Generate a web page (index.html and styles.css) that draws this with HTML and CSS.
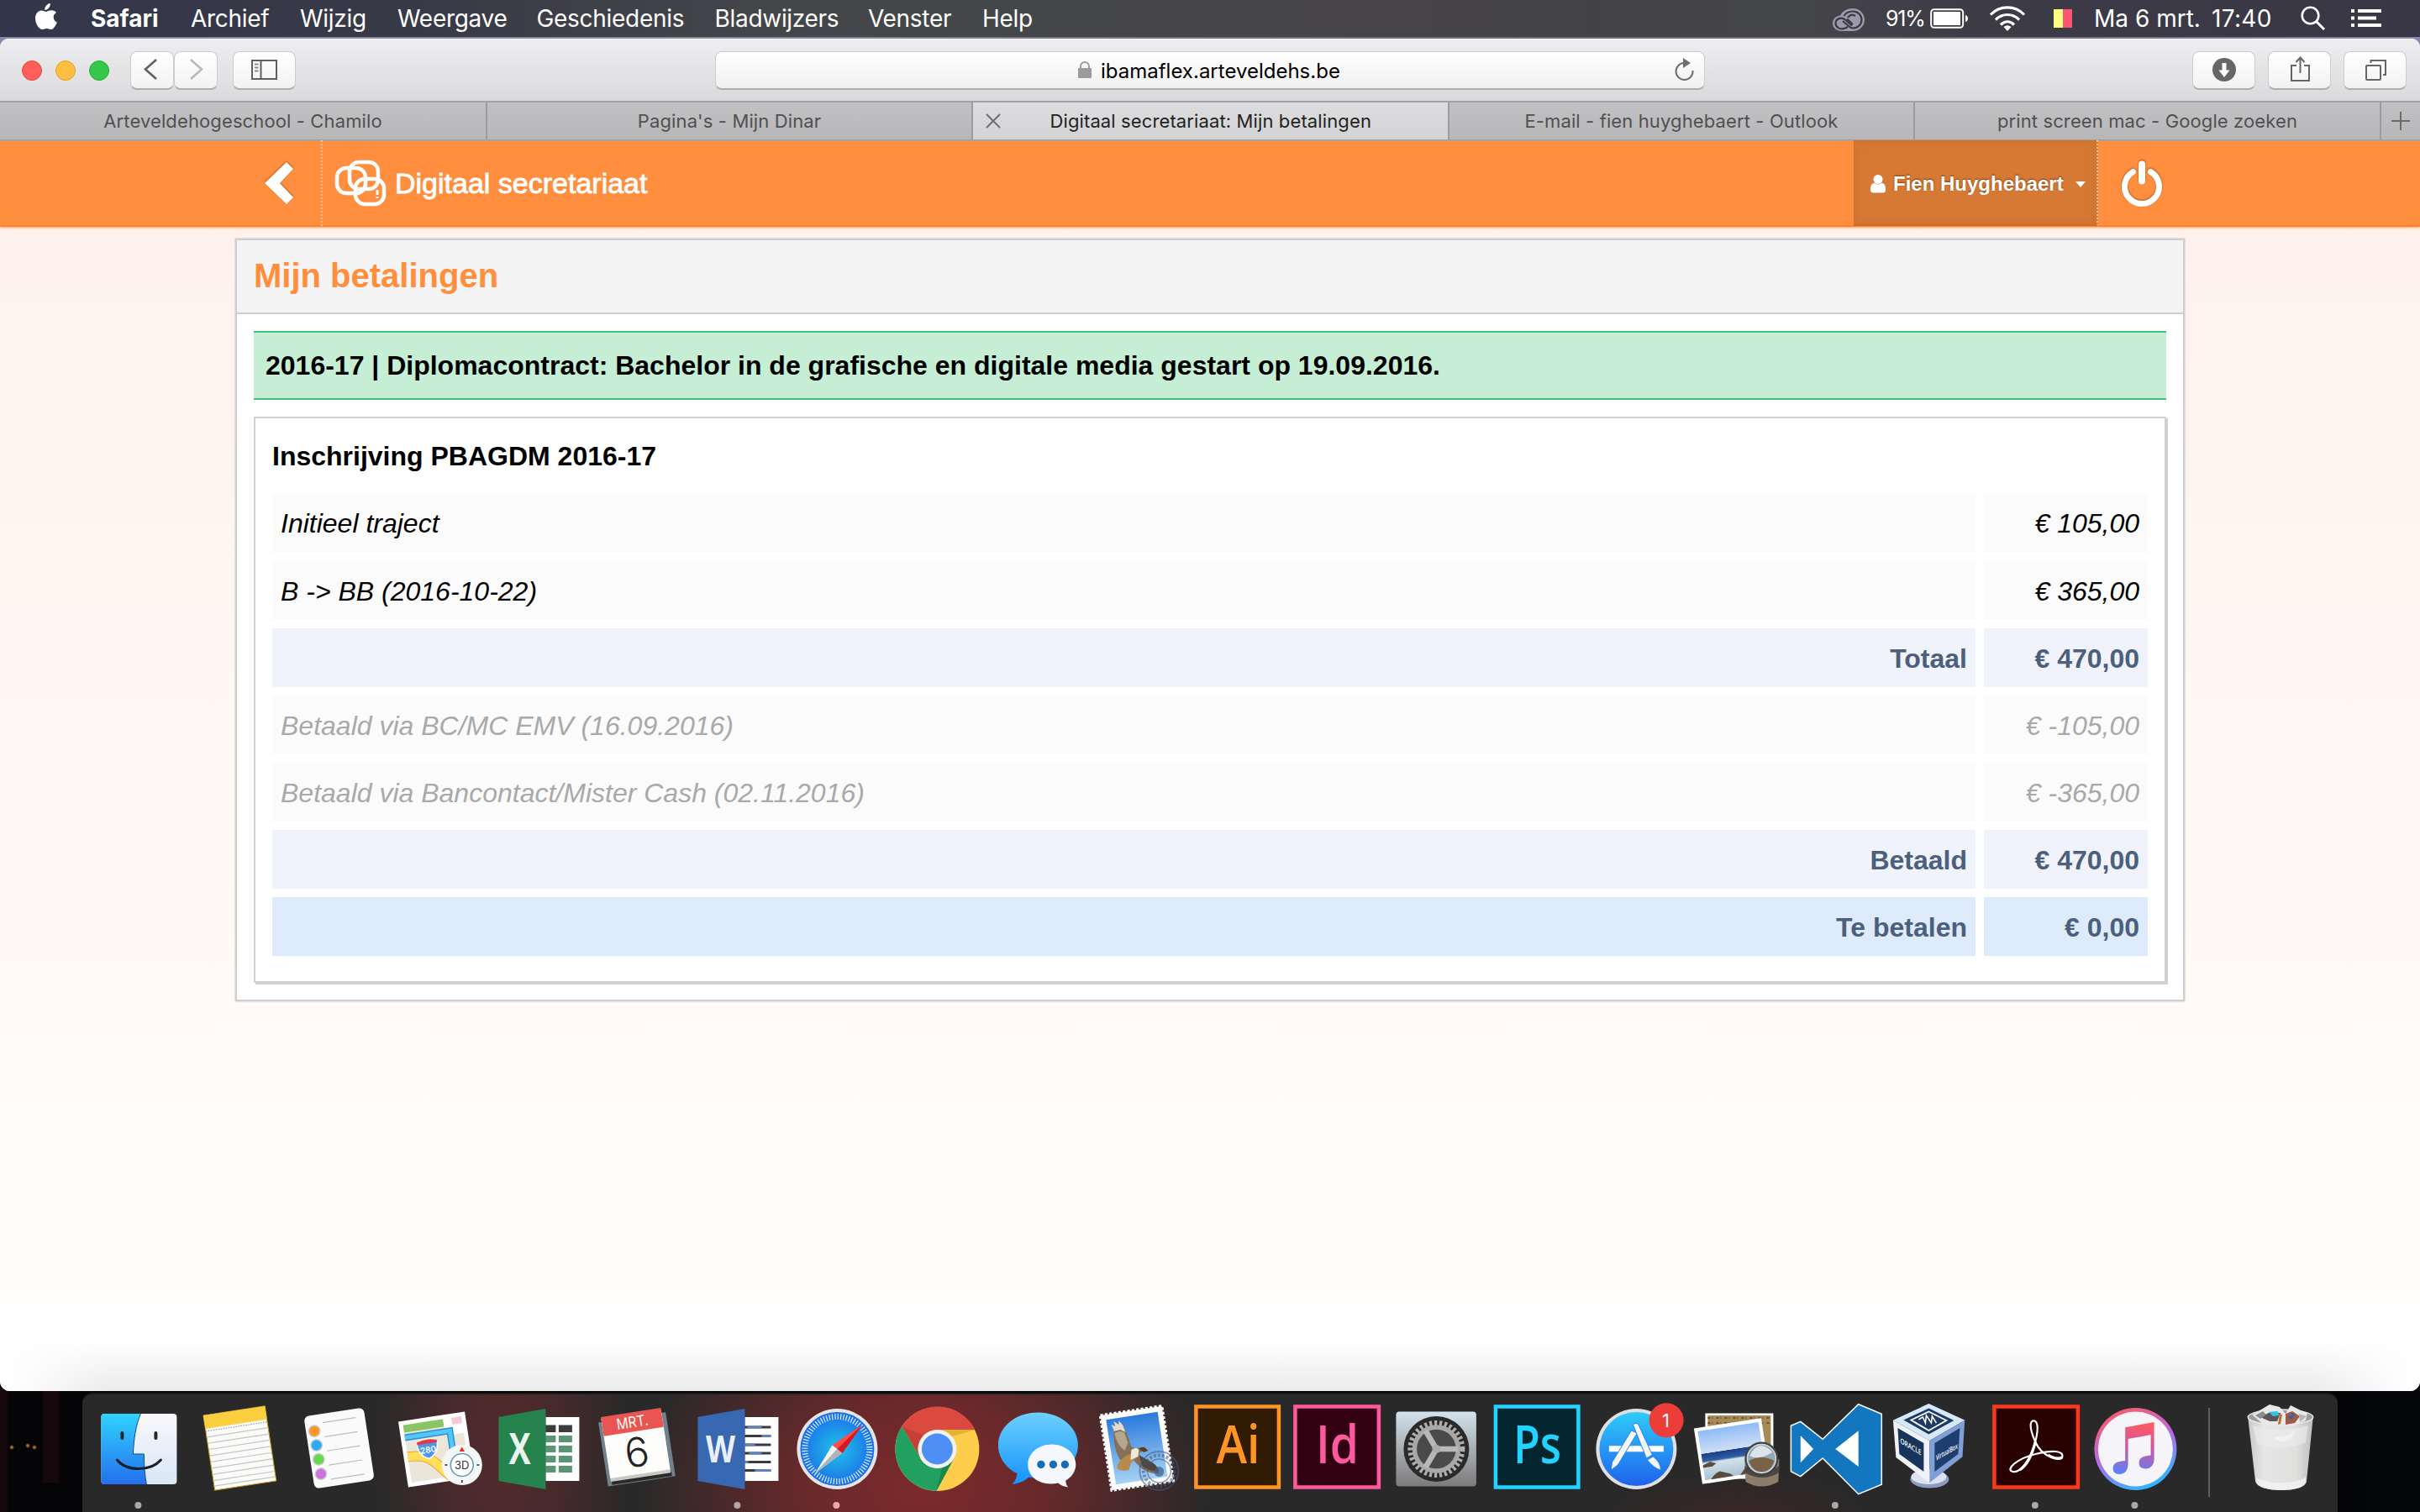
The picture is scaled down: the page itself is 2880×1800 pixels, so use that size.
FILE: index.html
```html
<!DOCTYPE html>
<html lang="nl">
<head>
<meta charset="utf-8">
<title>Digitaal secretariaat: Mijn betalingen</title>
<link rel="stylesheet" href="styles.css">
</head>
<body>
<div class="desktop">
  <header class="menubar">
    <svg class="apple" viewBox="0 0 26 32"><path fill="#fff" d="M17.8 0c.3 2-.5 4-1.700 5.400C14.900 6.900 13 8 11.300 7.900c-.3-2 .6-4 1.700-5.200C14.200 1.200 16.200.2 17.800 0zM25 11c-2 1.200-3.300 3-3.300 5.500 0 2.900 1.700 5 4.100 5.900-.9 2.700-3.800 8.600-7.100 8.700-2 0-2.700-1.200-5.200-1.200s-3.300 1.200-5.200 1.200C4.300 31.200 0 24 0 17.800 0 11.800 3.600 8.500 7.300 8.400c2.300 0 4.300 1.500 5.600 1.500 1.200 0 3.700-1.800 6.600-1.600 2.200.1 4.200 1 5.500 2.700z"/></svg>
    <nav class="menus">
      <b>Safari</b><span>Archief</span><span>Wijzig</span><span>Weergave</span><span>Geschiedenis</span><span>Bladwijzers</span><span>Venster</span><span>Help</span>
    </nav>
    <div class="status">
      <svg class="cc" viewBox="0 0 38 28"><path d="M11 27C4.500 27 0 23 0 17.800 0 12.500 4 8.800 9 8.400 12 3 17.500 0 24 0c8 0 14 6 14 13.500S32 27 24 27z" fill="#9c9aa8"/><g fill="none" stroke="#3a3845" stroke-width="2.200"><path d="M18 22l-3 1.500C9 26 3.500 22.500 3.500 17.800c0-5.800 7-8 11.500-4.300l8 7"/><path d="M13.500 9C15.500 5.500 19.500 3.500 24 3.500c6 0 10.500 4.500 10.500 10S30 23.500 24.500 23.500c-2 0-4-1-5.500-2.500l-7-6"/><path d="M17 12.500l7 6.500M18 11c2.500-3.500 6-4 9-2"/></g></svg>
      <span class="battery-text">91%</span>
      <svg class="battery" viewBox="0 0 48 24"><rect x="1.200" y="1.200" width="38" height="21.600" rx="3.500" fill="none" stroke="#fff" stroke-width="2"/><rect x="4" y="4" width="32" height="16" fill="#fff"/><path d="M42 8c4 1 4 7 0 8z" fill="#fff"/></svg>
      <svg class="wifi" viewBox="0 0 42 30"><g fill="none" stroke="#fff" stroke-width="3.200"><path d="M1 10.500C12-1 30-1 41 10.500"/><path d="M7 16.500c8-8 20-8 28 0"/><path d="M13 22.500c5-5 11-5 16 0"/></g><path d="M21 30l-4.500-5q4.500-3.500 9 0z" fill="#fff"/></svg>
      <span class="flag"></span>
      <span class="date">Ma 6 mrt.</span><span class="time">17:40</span>
      <svg class="search" viewBox="0 0 30 30"><circle cx="11.500" cy="11.500" r="9.800" fill="none" stroke="#fff" stroke-width="2.600"/><path d="M18.500 18.500l9.500 9.500" stroke="#fff" stroke-width="3"/></svg>
      <svg class="list" viewBox="0 0 36 22"><path fill="#fff" d="M0 0h4v4H0zM8 0h28v4H8zM0 8.500h4v4H0zM8 8.500h22v4H8zM0 17h4v4H0zM8 17h28v4H8z"/></svg>
    </div>
  </header>

  <section class="window">
    <div class="toolbar">
      <i class="light red"></i><i class="light yellow"></i><i class="light green"></i>
      <span class="btn back"><svg viewBox="0 0 52 46"><path d="M31 11L18 22.500 31 34" fill="none" stroke="#606060" stroke-width="2.600"/></svg></span>
      <span class="btn fwd"><svg viewBox="0 0 52 46"><path d="M20 11l13 11.500L20 34" fill="none" stroke="#b9b9b9" stroke-width="2.600"/></svg></span>
      <span class="btn side"><svg viewBox="0 0 74 46"><g fill="none" stroke="#5f5f5f" stroke-width="2"><rect x="22" y="12" width="29" height="22"/><path d="M32.500 12v22"/><path d="M25 16.500h4.500M25 20.500h4.500M25 24.500h4.500" stroke="#8a8a8a"/></g></svg></span>
      <div class="address">
        <svg class="lock" viewBox="0 0 16 20"><rect y="8" width="16" height="12" rx="1" fill="#9b9b9b"/><path d="M3 9V6a5 5 0 0 1 10 0v3" fill="none" stroke="#9b9b9b" stroke-width="2"/></svg>
        <span class="url">ibamaflex.arteveldehs.be</span>
        <svg class="reload" viewBox="0 0 24 28"><path d="M12 6a10 10 0 1 0 10.500 9" fill="none" stroke="#6d6d6d" stroke-width="2"/><path d="M11 0l9 6-9 6z" fill="#6d6d6d"/></svg>
      </div>
      <span class="btn tool first"><svg viewBox="0 0 74 46"><circle cx="37" cy="23" r="14" fill="#666"/><path d="M34.500 15h5v8.500h4L37 32l-6.500-8.500h4z" fill="#fff"/></svg></span>
      <span class="btn tool"><svg viewBox="0 0 74 46"><g fill="none" stroke="#666" stroke-width="2"><path d="M33 18h-6v18h21V18h-6M37.500 27V9M32.500 14l5-5.500 5 5.500"/></g></svg></span>
      <span class="btn tool"><svg viewBox="0 0 74 46"><g fill="none" stroke="#666" stroke-width="2"><rect x="26" y="18" width="17" height="17" rx="1"/><path d="M31.500 15v-3H49v17h-3"/></g></svg></span>
    </div>
    <div class="tabs">
      <span class="tab t1">Arteveldehogeschool - Chamilo</span>
      <span class="tab t2">Pagina's - Mijn Dinar</span>
      <span class="tab t3 active"><svg class="close" viewBox="0 0 18 18"><path d="M1 1l16 16M17 1L1 17" stroke="#6b6b6b" stroke-width="1.800"/></svg>Digitaal secretariaat: Mijn betalingen</span>
      <span class="tab t4">E-mail - fien huyghebaert - Outlook</span>
      <span class="tab t5">print screen mac - Google zoeken</span>
      <span class="tab plus"><svg viewBox="0 0 22 22"><path d="M11 0v22M0 11h22" stroke="#6b6b6b" stroke-width="2"/></svg></span>
    </div>

    <div class="sitebar">
      <svg class="chev" viewBox="0 0 34 52"><path d="M26 1l8 8-16 17 16 17-8 8L0 26z" fill="#fff"/></svg>
      <div class="brand">
        <svg viewBox="0 0 62 56"><g fill="none" stroke="#fff" stroke-width="4.500"><rect x="18" y="3" width="34" height="32" rx="11"/><rect x="3" y="10" width="34" height="30" rx="11"/><rect x="25" y="23" width="34" height="30" rx="11"/></g><path d="M51 36v10" stroke="#fff" stroke-width="3" stroke-dasharray="6 2"/></svg>
        <span>Digitaal secretariaat</span>
      </div>
      <div class="user">
        <svg class="person" viewBox="0 0 18 22"><circle cx="9" cy="5.500" r="5.500" fill="#fff"/><path d="M0 18c0-5 1-8 5-8q4 3 8 0c4 0 5 3 5 8 0 2-1 3.500-3 3.500H3C1 21.500 0 20 0 18z" fill="#fff"/></svg>
        <span>Fien Huyghebaert</span>
        <svg class="caret" viewBox="0 0 12 7"><path d="M0 0h12L6 7z" fill="#fff"/></svg>
      </div>
      <svg class="power" viewBox="0 0 50 54"><path d="M14.500 13.500a20.500 20.500 0 1 0 21 0" fill="none" stroke="#fff" stroke-width="7" stroke-linecap="round"/><path d="M25 4.500v20" stroke="#fff" stroke-width="8" stroke-linecap="round"/></svg>
    </div>

    <main class="page">
      <section class="panel">
        <h1>Mijn betalingen</h1>
        <div class="content">
          <div class="contract">2016-17 | Diplomacontract: Bachelor in de grafische en digitale media gestart op 19.09.2016.</div>
          <div class="card">
            <h2>Inschrijving PBAGDM 2016-17</h2>
            <div class="rows">
              <div class="row"><span>Initieel traject</span><span>€ 105,00</span></div>
              <div class="row"><span>B -&gt; BB (2016-10-22)</span><span>€ 365,00</span></div>
              <div class="row total"><span>Totaal</span><span>€ 470,00</span></div>
              <div class="row paid"><span>Betaald via BC/MC EMV (16.09.2016)</span><span>€ -105,00</span></div>
              <div class="row paid"><span>Betaald via Bancontact/Mister Cash (02.11.2016)</span><span>€ -365,00</span></div>
              <div class="row total"><span>Betaald</span><span>€ 470,00</span></div>
              <div class="row total due"><span>Te betalen</span><span>€ 0,00</span></div>
            </div>
          </div>
        </div>
      </section>
      <div class="dockshade"></div>
    </main>
  </section>

  <footer class="dock">
    <!-- Finder -->
    <svg class="app" viewBox="-59.4 -67 118.8 142">
      <defs>
        <linearGradient id="fb" x1="0" y1="0" x2="0" y2="1"><stop offset="0" stop-color="#30d2fd"/><stop offset="1" stop-color="#2470ee"/></linearGradient>
        <linearGradient id="fw" x1="0" y1="0" x2="0" y2="1"><stop offset="0" stop-color="#f8f8f9"/><stop offset="1" stop-color="#d9e7f6"/></linearGradient>
      </defs>
      <rect x="-45" y="-42" width="90" height="84" rx="4" fill="url(#fw)"/>
      <path d="M2-42C-4-28-6-12-7 6H6c0 14 1 26 3 36h-50q-4 0-4-4v-76q0-4 4-4z" fill="url(#fb)"/>
      <path d="M2-42C-4-28-6-12-7 6H6c0 14 1 26 3 36" fill="none" stroke="#14489a" stroke-width="1"/>
      <path d="M-20-19v6M20-19v6" stroke="#1d2a33" stroke-width="4" stroke-linecap="round"/>
      <path d="M-26 13C-15 27 14 27 26 13" fill="none" stroke="#14212d" stroke-width="3" stroke-linecap="round"/>
      <circle cx="-1" cy="67" r="4" fill="#a9a9a9"/>
    </svg>
    <!-- Notes -->
    <svg class="app" viewBox="-59.4 -67 118.8 142">
      <g transform="translate(2 -1) rotate(-8.700)"><rect x="-37" y="-45" width="74" height="90" fill="#fbfbfa" stroke="#c99b16" stroke-width="1"/><rect x="-37" y="-45" width="74" height="16" fill="#fccf3e"/><path d="M-37-26h74" stroke="#888" stroke-width="1" stroke-dasharray="1.500 1.500"/><path d="M-37-19h74M-37-11.500h74M-37-4h74M-37 3.500h74M-37 11h74M-37 18.500h74M-37 26h74M-37 33.500h74M-37 40h74" stroke="#c4c4c4" stroke-width="1.200"/></g>
    </svg>
    <!-- Reminders -->
    <svg class="app" viewBox="-59.4 -67 118.8 142">
      <g transform="translate(1 -2) rotate(-8.700)"><rect x="-36" y="-42.500" width="72" height="87" rx="6" fill="#fafafa"/><path d="M-15-32h40M-15-15h40M-15 2h40M-15 19h40M-15 36h40" stroke="#bdbdbd" stroke-width="1.200"/><g stroke="#cfcfcf" stroke-width="1.500"><circle cx="-26" cy="-23.500" r="6.800" fill="#fd9527"/><circle cx="-26" cy="-6.500" r="6.800" fill="#2baaf6"/><circle cx="-26" cy="10.500" r="6.800" fill="#68d94c"/><circle cx="-26" cy="28" r="6.800" fill="#cb74e0"/></g></g>
    </svg>
    <!-- Maps -->
    <svg class="app" viewBox="-59.4 -67 118.8 142">
      <g transform="translate(-2 0) rotate(-8.700)"><rect x="-40" y="-39" width="80" height="79" fill="#fff"/><rect x="-35" y="-34" width="70" height="69" fill="#ebe5da"/><rect x="-35" y="-34" width="48" height="9" fill="#89c663"/><rect x="13" y="-34" width="22" height="20" fill="#fff"/><rect x="23" y="-34" width="12" height="8" fill="#f9c9d3"/><path d="M-35-19h54v35" fill="none" stroke="#2a8fd6" stroke-width="8"/><path d="M-35-19h54v35" fill="none" stroke="#53c6fb" stroke-width="5"/><path d="M-35 4C-18 4-10 8 0 20l12 15" fill="none" stroke="#eaa536" stroke-width="12"/><path d="M-35 4C-18 4-10 8 0 20l12 15" fill="none" stroke="#ffe058" stroke-width="10"/><path d="M-22-11q11-4 24 0 1 16-12 21Q-23 5-22-11z" fill="#4c97ee" stroke="#fff" stroke-width="1.500"/><path d="M-22-11q11-4 24 0v3h-24z" fill="#dd3c45"/><text x="-10" y="3" class="road">280</text></g>
      <circle cx="28.400" cy="19" r="24" fill="#f5f6f8"/><circle cx="28.400" cy="19" r="13.500" fill="#fff" stroke="#6a9db9" stroke-width="1.600"/><path d="M28.400-2.500l3.200 5.500h-6.400z" fill="#ed2d1d"/><path d="M8 19h3M46 19h3M28.400 37v3" stroke="#222" stroke-width="1.500"/><text x="28.400" y="24" class="three">3D</text>
    </svg>
    <!-- Excel -->
    <svg class="app" viewBox="-59.4 -67 118.8 142">
      <path d="M9-38h40v76H9z" fill="#fff"/><path d="M7-28.500h14v8.500H7zM24.500-28.500h16v8.500h-16z" fill="#3c3c3c"/><path d="M7-16h14v8H7zM24.500-16h16v8h-16zM7-4h14v8H7zM24.500-4h16v8h-16zM7 8h14v8H7zM24.500 8h16v8h-16zM7 20h14v8H7zM24.500 20h16v8h-16z" fill="#5b9674"/><path d="M-47-38L9-48v96l-56-10z" fill="#27834d"/><text x="-22" y="18" class="office" textLength="26" lengthAdjust="spacingAndGlyphs">X</text>
    </svg>
    <!-- Calendar -->
    <svg class="app" viewBox="-59.4 -67 118.8 142">
      <g transform="translate(-2 0) rotate(-8.700)"><rect x="-40" y="-38" width="81" height="77" fill="#71818b"/><path d="M-35 33h72v5h-72z" fill="#2a2a2a"/><rect x="-36" y="-42" width="72" height="76" fill="#c9c8c5"/><rect x="-36" y="-42" width="72" height="72" fill="#fdfdfc"/><rect x="-36" y="-44" width="72" height="23" fill="#e95550"/><text x="0" y="-26" class="mon" textLength="38" lengthAdjust="spacingAndGlyphs">MRT.</text><text x="0" y="21" class="day">6</text></g>
    </svg>
    <!-- Word -->
    <svg class="app" viewBox="-59.4 -67 118.8 142">
      <path d="M9-38h40v76H9z" fill="#fff"/><path d="M7-26h33M7-15.500h33M7-5h33M7 5h33M7 15.500h33M7 25.500h33" stroke="#3b3b3b" stroke-width="3.200"/><path d="M12-26h17M29-15.500h11M7-5h14M14 5h15M7 15.500h6M21 25.500h19" stroke="#5f82be" stroke-width="3.200"/><path d="M-47-38L9-48v96l-56-10z" fill="#3868b2"/><text x="-20" y="16" class="office w" textLength="35" lengthAdjust="spacingAndGlyphs">W</text><circle cx="0" cy="67" r="4" fill="#b7a4a4"/>
    </svg>
    <!-- Safari -->
    <svg class="app" viewBox="-59.4 -67 118.8 142">
      <defs><radialGradient id="sf"><stop offset="0" stop-color="#1fc4e8"/><stop offset="1" stop-color="#1c6fe9"/></radialGradient></defs>
      <circle r="48" fill="#e6e6e8"/><circle r="44" fill="url(#sf)"/><circle r="38.500" fill="none" stroke="#dcebfa" stroke-width="7" stroke-dasharray="1.200 2.160"/>
      <path d="M30-29L-6-4.500 6 5z" fill="#ff4b4b"/><path d="M30-29L0 0l6 5z" fill="#d31922"/><path d="M-27 30L-6-4.500 0 0z" fill="#f3f3f3"/><path d="M-27 30L0 0l6 5z" fill="#b4b4b4"/><circle cx="-1" cy="67" r="4" fill="#f3a5a8"/>
    </svg>
    <!-- Chrome -->
    <svg class="app" viewBox="-59.4 -67 118.8 142">
      <circle r="50" fill="#fecd4c"/><path d="M-42-27A50 50 0 0 1 45-23H0L-20 11z" fill="#dc4a3f"/><path d="M-42-27A50 50 0 0 0-1 50L20 11A23 23 0 0 1-20 11z" fill="#22a05f"/><path d="M0-23h45l-30 9z" fill="#d8a82e" opacity=".7"/><path d="M-42-27l22 38 4-27z" fill="#a83730" opacity=".45"/><path d="M20 11L-1 50 6 22z" fill="#177b45" opacity=".7"/><circle r="23" fill="#f2f2f2"/><circle r="18.500" fill="#4e8ff5"/>
    </svg>
    <!-- Messages -->
    <svg class="app" viewBox="-59.4 -67 118.8 142">
      <defs><linearGradient id="ms" x1="0" y1="0" x2="0" y2="1"><stop offset="0" stop-color="#6bd0fb"/><stop offset="1" stop-color="#1593fd"/></linearGradient></defs>
      <path d="M1-43.500c26 0 47.500 17 47.500 39S27 34.500 1 34.500q-6 0-11-1Q-18 41-30 42q6-6 6-13C-37 23-46.500 10-46.500-4.500c0-22 21-39 47.500-39z" fill="url(#ms)"/><path d="M17.400-5.500c16 0 28.500 11 28.500 24 0 8-5 15-12 19q0 5 3 8-8-1-12-5c-20 4-36-6-36-22 0-13 12-24 28.500-24z" fill="#f4f8fd"/><g fill="#186eb4"><circle cx="4.500" cy="18.500" r="4.700"/><circle cx="19" cy="18.500" r="4.700"/><circle cx="33" cy="18.500" r="4.700"/></g>
    </svg>
    <!-- Mail -->
    <svg class="app" viewBox="-59.4 -67 118.8 142">
      <defs><linearGradient id="ml" x1="0" y1="0" x2="0" y2="1"><stop offset="0" stop-color="#2b7ade"/><stop offset="1" stop-color="#a7d3f4"/></linearGradient></defs>
      <g transform="translate(-.5 -1) rotate(-8.700)"><rect x="-37" y="-45" width="74" height="90" fill="#fbfbfb" stroke="#fbfbfb" stroke-width="3.500" stroke-dasharray="3.200 2.200"/><rect x="-31" y="-39" width="62" height="78" fill="url(#ml)"/></g>
      <path d="M-28-23l-3-6 5 2-2-6 6 4 0-5 5 6c5 9 7 17 10 25l5 3q4-3 7-1l3 3-5 2-1 5 10 5q10 4 14 15-13 1-22-7l-9-9-8 5c-10-3-16-20-15-41z" fill="#86705a"/>
      <path d="M-28-23l-3-6 5 2-2-6 6 4 0-5 5 6 3 8-6-3-8 2z" fill="#e2dccf"/><path d="M-27-19q8-4 12 0l4 12-4 9q-10-8-12-21z" fill="#b5a68e"/><path d="M-15 9l12-6 5 4-9 9-3 9q-10 2-14-2-1-6 9-14z" fill="#b98a4e"/><path d="M-7 1q6-4 9 0l-1 8-9 4z" fill="#f0e8d8"/><path d="M2 7l12 7q10 4 12 13-12 0-20-7z" fill="#51443a"/><path d="M2 0q4-4 8-1l3 3-5 2z" fill="#5a3e25"/>
      <g fill="none" stroke="#45587a" stroke-opacity=".55"><circle cx="26" cy="26" r="23" stroke-width="2"/><circle cx="26" cy="26" r="14" stroke-width="1.500"/><circle cx="26" cy="26" r="18.500" stroke-width="4" stroke-dasharray="3 2"/></g><circle cx="26" cy="27" r="6" fill="#3f618e" opacity=".75"/>
    </svg>
    <!-- Illustrator -->
    <svg class="app" viewBox="-59.4 -67 118.8 142"><rect x="-48" y="-50.500" width="98.500" height="96" fill="#311b05" stroke="#fd9426" stroke-width="4.500"/><text x="2" y="16.500" class="adobe" fill="#ff9426" textLength="52" lengthAdjust="spacingAndGlyphs">Ai</text></svg>
    <!-- InDesign -->
    <svg class="app" viewBox="-59.4 -67 118.8 142"><rect x="-49" y="-50.500" width="99.500" height="96" fill="#320213" stroke="#fd5a9e" stroke-width="4.500"/><text x="1" y="16.500" class="adobe" fill="#fd5a9e" textLength="51" lengthAdjust="spacingAndGlyphs">Id</text></svg>
    <!-- System preferences -->
    <svg class="app" viewBox="-59.4 -67 118.8 142">
      <defs><linearGradient id="sp" x1="0" y1="0" x2="0" y2="1"><stop offset="0" stop-color="#d3e2ec"/><stop offset="1" stop-color="#7c7a7b"/></linearGradient></defs>
      <rect x="-48" y="-44.500" width="95.500" height="89" rx="4" fill="url(#sp)"/><circle r="39" fill="#2a2a2a"/><circle r="31" fill="none" stroke="#b1afad" stroke-width="6" stroke-dasharray="3.200 2.780"/><circle r="26" fill="#4a4a4a" stroke="#aaa8a6" stroke-width="5.500"/><path d="M0 0h26M0 0l-13-22M0 0l-13 22" stroke="#bab8b6" stroke-width="6.500"/><circle r="5" fill="#a9adb2"/>
    </svg>
    <!-- Photoshop -->
    <svg class="app" viewBox="-59.4 -67 118.8 142"><rect x="-48.500" y="-50.500" width="98.500" height="96" fill="#03262f" stroke="#22d2ff" stroke-width="4.500"/><text x="1" y="16.500" class="adobe" fill="#22d2ff" textLength="57" lengthAdjust="spacingAndGlyphs">Ps</text></svg>
    <!-- App Store -->
    <svg class="app" viewBox="-59.4 -67 118.8 142">
      <defs><linearGradient id="as" x1="0" y1="0" x2="0" y2="1"><stop offset="0" stop-color="#2fcbfb"/><stop offset="1" stop-color="#1f62ec"/></linearGradient></defs>
      <circle r="48" fill="#dfe0e2"/><circle r="44" fill="url(#as)"/><path d="M-32.500-.3h65" stroke="#fff" stroke-width="7"/><path d="M-6-22l7 3L-22 19l-8 6 1-9z" fill="#f4f5f7" stroke="#2584ee" stroke-width="1"/><path d="M-4-29q5-4 7 1l16 35-7 4zM13 13l7-4q9 7 9 16-8-2-16-12z" fill="#f4f5f7" stroke="#2584ee" stroke-width="1"/>
      <circle cx="35.700" cy="-34.300" r="20.500" fill="#ec3d39"/><text x="35" y="-26.500" class="badge">1</text>
    </svg>
    <!-- Preview -->
    <svg class="app" viewBox="-59.4 -67 118.8 142">
      <defs><linearGradient id="pv" x1="0" y1="0" x2="0" y2="1"><stop offset="0" stop-color="#8fbcf7"/><stop offset=".46" stop-color="#cfdef5"/><stop offset=".47" stop-color="#1e3d88"/><stop offset=".62" stop-color="#2f5ea3"/><stop offset=".66" stop-color="#d3e2ec"/><stop offset="1" stop-color="#a9c3cf"/></linearGradient></defs>
      <rect x="-36" y="-42.500" width="81" height="78" fill="#fff"/><rect x="-33" y="-40" width="75" height="72" fill="#a88a58"/><path d="M-33-37h75M-33-31h75" stroke="#6d522f" stroke-width="2" stroke-dasharray="3 2 1 4"/><g transform="translate(-4 2) rotate(-8.700)"><rect x="-41" y="-33" width="81" height="67" fill="#fff"/><rect x="-37" y="-29" width="73" height="59" fill="url(#pv)"/><path d="M-37 12l9-3 7 3-5 3h-11zM-30 30q6-7 12-8l12 5 3 3zM5 30l8-8 16 4v4z" fill="#5b4b3a"/></g>
      <path d="M11 12h41l-1 27q-20 11-39 0z" fill="#8c7d6b"/><path d="M11 20q20 14 41 0v8q-20 12-41 0z" fill="#4c4540"/><circle cx="31" cy="11.500" r="18.500" fill="#93a9b3" stroke="#3d4247" stroke-width="3"/><circle cx="31" cy="11.500" r="17" fill="none" stroke="#d4d8dc" stroke-width="1.500"/><path d="M16 14q15-8 30 0-4 13-15 13T16 14z" fill="#7a6247"/><path d="M17 8q10 6 27-4-7-8-14-8T17 8z" fill="#dce5ea"/>
    </svg>
    <!-- Visual Studio Code -->
    <svg class="app" viewBox="-59.4 -67 118.8 142"><path d="M-53-27.700l11.400-5 26.400 21 42.500-41.600 27.600 11.600v84L27.300 53.700-15.200 11l-26.400 21.700-11.400-6z" fill="#1277bf" stroke="#fff" stroke-width="1.500"/><path d="M-41.600-16L-26.300 0l-15.300 16.300zM27.300-21.700L-.2 0l27.500 21z" fill="#fff"/><circle cx="-.5" cy="67" r="4" fill="#a9a9a9"/></svg>
    <!-- VirtualBox -->
    <svg class="app" viewBox="-59.4 -67 118.8 142">
      <ellipse cx="-7" cy="36" rx="23" ry="10.500" fill="#8d9bc0"/><ellipse cx="-8" cy="33" rx="21" ry="9" fill="#dbe2f1"/>
      <path d="M-8-54l43 19.700L-7-10l-43.500-24.300z" fill="#d7e8f8"/><path d="M-50.500-34.300L-7-10v50.300L-47 10z" fill="#f0f2f8"/><path d="M34.800-34.300L-7-10v50.300L32.100 9.300z" fill="#7f9fd5"/>
      <path d="M-8-48.500l30 14.500-30 16.500L-38-34.500z" fill="#1d3a63"/><path d="M-8-44.500l21 10.500-21 12-21-12.500z" fill="none" stroke="#fff" stroke-width="1.800"/><path d="M-20-35l5-3 3 7 1-9 6 9 1-8 5 8" fill="none" stroke="#fff" stroke-width="1.500"/>
      <path d="M-45-25l31 18v34l-29-21z" fill="#16345c"/><path d="M29-25L-1-7v34L27 6z" fill="#1d3f70"/>
      <text transform="matrix(.86 .5 0 1 -42 -7)" class="vb1" textLength="29" lengthAdjust="spacingAndGlyphs">ORACLE</text><text transform="matrix(.86 -.5 0 1 .5 14)" class="vb2" textLength="30" lengthAdjust="spacingAndGlyphs">VirtualBox</text>
    </svg>
    <!-- Acrobat -->
    <svg class="app" viewBox="-59.4 -67 118.8 142"><rect x="-49" y="-50.500" width="99.500" height="96" fill="#2a0101" stroke="#fb371c" stroke-width="4.500"/><g fill="none" stroke="#fff"><path d="M-27 27C-36 25-24 12 0 6c20-5 33-4 32 3-1 7-24 1-32-17-9-20-6-27-1-25.500 6 2.500 3 20-2 33.500C-8 14-18 29-27 27z" stroke-width="2.200"/><path d="M0-9C-4 7-11 20-19 25M15 7q9 6 17 3" stroke-width="3.200"/></g><circle cx="-.5" cy="67" r="4" fill="#a9a9a9"/></svg>
    <!-- iTunes -->
    <svg class="app" viewBox="-59.4 -67 118.8 142">
      <defs><linearGradient id="ir" x1=".2" y1="0" x2=".6" y2="1"><stop offset="0" stop-color="#ff5b5c"/><stop offset=".5" stop-color="#b968e8"/><stop offset="1" stop-color="#2cb7ff"/></linearGradient><linearGradient id="in" x1=".5" y1="0" x2=".4" y2="1"><stop offset="0" stop-color="#ff5b62"/><stop offset=".45" stop-color="#d1559f"/><stop offset="1" stop-color="#5b82fb"/></linearGradient></defs>
      <circle r="49" fill="url(#ir)"/><circle r="44.500" fill="#f5f4f9"/><path d="M-12.200-25.700L22.200-32v44.500c0 6-4 11-10 11s-8-3-8-7c0-7 7-8.500 14-9v-24.500L-8.800-12v30c0 7-4 12-10 12s-8-3-8-7c0-7 7-8.500 14.600-9z" fill="url(#in)"/><circle cx="-1" cy="67" r="4" fill="#a9a9a9"/>
    </svg>
    <i class="divider"></i>
    <!-- Trash -->
    <svg class="trash" viewBox="-59 -67 118 142">
      <defs><linearGradient id="tr" x1="0" y1="0" x2="1" y2="0"><stop offset="0" stop-color="#c9c9c9"/><stop offset=".25" stop-color="#e6e6e6"/><stop offset=".75" stop-color="#dfdfde"/><stop offset="1" stop-color="#bdbdbd"/></linearGradient></defs>
      <path d="M-38.800-38h77.600L31 38c0 7-13 11-30 11s-30-4-31-11z" fill="url(#tr)"/><ellipse cy="-38" rx="38.800" ry="9" fill="#9d9d9d" stroke="#e9e9e9" stroke-width="1.500"/><path d="M-34-41l11-6 10-6 12 3 7 8 6-10 12 6 8 3-2 9-14 6-16 1-20-2z" fill="#e8e8e8"/><path d="M-24-38l12-6 12 1-4 10h-9z" fill="#5e5558"/><path d="M6-42l8-3 9 6-6 8-11 2z" fill="#a05b46"/><path d="M-14-44l10-1 3 5-8 1z" fill="#2cc5e0"/><path d="M-1-42l3 1-2 11-3 1z" fill="#c76a3a"/><path d="M8-38l8-3-2 6zM12-44l6 3-3 2z" fill="#365ea9"/><path d="M22-42l9 3-8 7z" fill="#b4b4b4"/><path d="M-30-40l9-5 4 4-7 5z" fill="#8c8c8c"/><path d="M-33-28q33 9 66 0l-3 20q-27 12-58 2z" fill="#ededed" opacity=".6"/><path d="M-8-14q17 0 25-8-1 10-12 13-9 1-13-5z" fill="#f7f7f7" opacity=".7"/><path d="M-29 34q29 13 59 0v5q-3 10-29 10t-30-10z" fill="#f5f5f5" opacity=".7"/>
    </svg>
  </footer>
</div>
</body>
</html>
```
FILE: styles.css
```css
* { box-sizing: border-box; }
body { margin: 0; }
svg { display: block; flex: none; overflow: visible; }

.desktop {
  width: 2880px; height: 1800px; overflow: hidden;
  display: flex; flex-direction: column;
  font-family: Inter, "Liberation Sans", sans-serif;
  background:
    radial-gradient(circle at 41px 1723px, #a8702f 0 1px, transparent 3px),
    radial-gradient(circle at 33px 1721px, #a8702f 0 1px, transparent 3px),
    radial-gradient(circle at 14px 1723px, #a8702f 0 1px, transparent 3px),
    linear-gradient(90deg, transparent 50px, #17080b 52px 68px, transparent 72px) 0 1650px / 100% 115px no-repeat,
    linear-gradient(90deg, #15070a 0 8px, #050406 10px 2700px, #04060a 2880px) 0 1600px / 100% 200px no-repeat,
    linear-gradient(90deg, #8388ab 0, #8a8a9e 30%, #73717c 50%, #6e6c77 80%, #8a85b0 100%);
}

/* system menu bar */
.menubar {
  flex: none; height: 44px; display: flex; align-items: center; color: #fff; font-size: 28px; white-space: nowrap;
  background: linear-gradient(90deg, #33364a 0, #393a47 18%, #454649 32%, #444649 42%, #474449 58%, #424247 66%, #454649 74%, #3d3b46 82%, #393745 100%);
  padding-left: 42px;
}
.apple { width: 26px; height: 32px; margin-top: -4px; }
.menus { display: grid; grid-template-columns: 119px 130px 116px 165.5px 212px 182.500px 136px 80px; margin-left: 40px; letter-spacing: -.3px; }
.menus b { font-weight: 700; letter-spacing: 0; }
.status { display: flex; align-items: center; margin-left: auto; width: 699px; height: 44px; }
.cc { width: 38px; height: 28px; margin-top: 3px; }
.battery-text { font-size: 25px; width: 52px; margin-left: 25px; letter-spacing: -1.2px; margin-top: -1px; }
.battery { width: 48px; height: 24px; margin-left: 1px; }
.wifi { width: 42px; height: 30px; margin-left: 23px; }
.flag { width: 22px; height: 22px; margin-left: 34px; background: linear-gradient(90deg, #ffff80 52%, #ff5571 52%); }
.date { margin-left: 26px; width: 140px; }
.time { width: 106px; letter-spacing: .3px; }
.search { width: 30px; height: 30px; }
.list { width: 36px; height: 22px; margin-left: 30px; }

/* browser window */
.window {
  flex: none; height: 1610px; margin-top: 2px; display: flex; flex-direction: column;
  border-radius: 10px 10px 12px 12px; overflow: hidden; background: #fff;
}
.toolbar {
  flex: none; height: 76px; display: flex; align-items: center; padding: 0 16px 0 26px;
  background: linear-gradient(#eeeef0, #dadadc); border-bottom: 2px solid #a2a2a5; border-top: 1px solid #f8f8f8;
}
.light { width: 24px; height: 24px; border-radius: 50%; margin-right: 16px; border: 1px solid; }
.red { background: #fe5f5a; border-color: #e2483f; }
.yellow { background: #febe3e; border-color: #e0a132; }
.green { background: #33c84a; border-color: #25ac37; margin-right: 25px; }
.btn {
  height: 46px; border-radius: 8px; background: linear-gradient(#fff, #f2f2f2);
  border: 1px solid #cdcdcf; border-bottom: 2px solid #aeaeb0; display: flex; align-items: center; justify-content: center;
}
.btn svg { height: 46px; }
.back { width: 52px; }
.fwd { width: 52px; }
.side, .tool { width: 75px; }
.side { margin-left: 18px; }
.tool { margin-left: 15px; }
.address {
  width: 1178px; height: 46px; margin-left: 499px; border-radius: 8px; display: flex; align-items: center;
  background: linear-gradient(#fff, #f0f0f0); border: 1px solid #cdcdcf; border-bottom: 2px solid #aeaeb0;
  padding: 0 12px 0 431px; font-size: 24px; color: #000;
}
.lock { width: 16px; height: 20px; }
.url { margin-left: 11px; padding-top: 3px; }
.reload { width: 24px; height: 28px; margin-left: auto; }
.first { margin-left: auto; }

.tabs { flex: none; height: 46px; display: flex; background: #bfbfc1; border-bottom: 2px solid #a0a0a2; font-size: 22px; letter-spacing: .12px; color: #505050; }
.tab {
  display: flex; align-items: center; justify-content: center; border-right: 2px solid #9c9c9e; white-space: nowrap;
  background: linear-gradient(#c1c1c3, #b7b7b9);
}
.active { background: linear-gradient(#dddddf, #d3d3d5); color: #222; }
.close { width: 18px; height: 18px; margin-right: auto; margin-left: 15px; }
.t1 { width: 580px; } .t2 { width: 578px; } .t3 { width: 567px; padding-right: 91px; } .t4 { width: 554px; } .t5 { width: 555px; } .plus { width: 46px; border: 0; }
.plus svg { width: 22px; height: 22px; }

/* site header */
.sitebar {
  flex: none; height: 102px; display: flex; align-items: center; padding-left: 315px; color: #fff;
  background: #ff8f3f; border-bottom: 2px solid #ff812b; position: relative; z-index: 1; box-shadow: 0 1px 3px #ff9c58;
  font-family: "Liberation Sans", Arial, sans-serif;
}
.chev { width: 34px; height: 52px; filter: drop-shadow(0 -1px 1px #a85a20); }
.brand { height: 102px; margin-left: 33px; padding-left: 14px; border-left: 2px dotted #ffc49a; display: flex; align-items: center; }
.brand svg { width: 62px; height: 56px; }
.brand span { font-size: 34px; margin: 1px 0 0 10px; -webkit-text-stroke: .8px #fff; }
.user {
  width: 291px; height: 102px; margin-left: auto; display: flex; align-items: center; padding-left: 20px;
  background: #d57935; border-bottom: 2px solid #cd6c26; border-right: 2px dotted #ffc49a;
  box-shadow: inset 0 0 14px #b9632455; font-size: 24px; font-weight: bold; text-shadow: 0 -1px 2px #7c4014;
}
.person { width: 18px; height: 22px; margin-top: 3px; }
.user span { margin-left: 9px; width: 202px; white-space: nowrap; padding-top: 3px; }
.caret { width: 12px; height: 7px; margin: 4px 0 0 15px; }
.power { width: 50px; height: 54px; margin: 0 306px 0 27px; filter: drop-shadow(0 -1px 1px #a85a20); }

/* page body */
.page {
  flex: 1; position: relative; padding: 14px 280px 0; font-family: "Liberation Sans", Arial, sans-serif;
  background: linear-gradient(#fff2ec 0, #fff6f0 30%, #fffaf7 66%, #fff 100%);
}
.panel { height: 908px; border: 2px solid #cbcfd3; background: #fff; box-shadow: 0 0 2px #c9b8b0; }
h1 {
  margin: 0; height: 88px; padding: 0 20px; background: #f4f4f4; border-bottom: 2px solid #cbcfd3;
  font-size: 40px; line-height: 84px; color: #ff8f3c;
}
.content { padding: 20px 20px 0; }
.contract {
  height: 82px; line-height: 79px; padding-left: 14px; font-size: 32px; font-weight: bold; color: #000;
  background: #c6eed4; border: solid #44bf76; border-width: 2px 0;
}
.card { height: 674px; margin-top: 20px; border: 2px solid #d1d1d1; box-shadow: 2px 2px 0 #d1d1d1; padding: 0 20px; }
h2 { margin: 0; font-size: 32px; line-height: 90px; height: 90px; color: #000; }
.rows { display: grid; gap: 10px; }
.row { display: grid; grid-template-columns: 1fr 195px; column-gap: 10px; height: 70px; line-height: 73px; font-size: 32px; font-style: italic; color: #000; }
.row:first-child { line-height: 71px; }
.row span { background: #fbfbfb; padding: 0 10px; height: 70px; }
.row span + span { text-align: right; }
.row.paid { color: #a9a9a9; }
.row.total { font-style: normal; font-weight: bold; color: #4b607c; text-align: right; }
.row.total span { background: #f0f3fc; }
.row.due span { background: #deebfd; }
.dockshade {
  position: absolute; left: 0; right: 0; bottom: 0; height: 60px;
  background: linear-gradient(#0000, #00000014);
  -webkit-mask-image: linear-gradient(90deg, transparent 10px, #000 130px 2750px, transparent 2870px);
}

/* dock */
.dock {
  flex: none; width: 2684px; height: 142px; margin: 2px 0 0 98px; padding-left: 7.6px; display: flex;
  border-radius: 12px 12px 0 0; border-top: 2px solid #1c1a1b;
  background:
    radial-gradient(ellipse 160px 50px at 1970px 142px, #3a2627, transparent),
    radial-gradient(ellipse 340px 260px at 1000px 110px, #7c2a2c 0, #6a292b 40%, transparent 100%),
    radial-gradient(ellipse 150px 330px at 500px 70px, #532a2d 0, #472a2c 45%, transparent 100%),
    #292929;
}
.app { width: 118.8px; height: 142px; margin-top: -2px; }
.divider { width: 2px; height: 106px; background: #5e5e5e; margin: 16px 0 0 27.6px; }
.trash { width: 118px; height: 142px; margin: -2px 0 0 25px; }
.dock text { text-anchor: middle; font-family: "Open Sans", sans-serif; }
.adobe { font-size: 64px; font-weight: 600; }
.dock .office { font-size: 52px; font-weight: 700; fill: #e9f6ee; }
.dock .office.w { font-size: 44px; fill: #e8f0fb; }
.dock .mon { font-family: Inter, sans-serif; font-size: 18px; fill: #fff; }
.dock .day { font-family: Inter, sans-serif; font-weight: 300; font-size: 48px; fill: #222; }
.dock .road { font-family: Inter, sans-serif; font-size: 10px; font-weight: 600; fill: #fff; }
.dock .three { font-family: Inter, sans-serif; font-size: 13px; fill: #333; }
.dock .badge { font-family: Inter, sans-serif; font-size: 22px; fill: #fff; }
.dock .vb1, .dock .vb2 { text-anchor: start; font-size: 9px; font-weight: 600; fill: #fff; }
```
